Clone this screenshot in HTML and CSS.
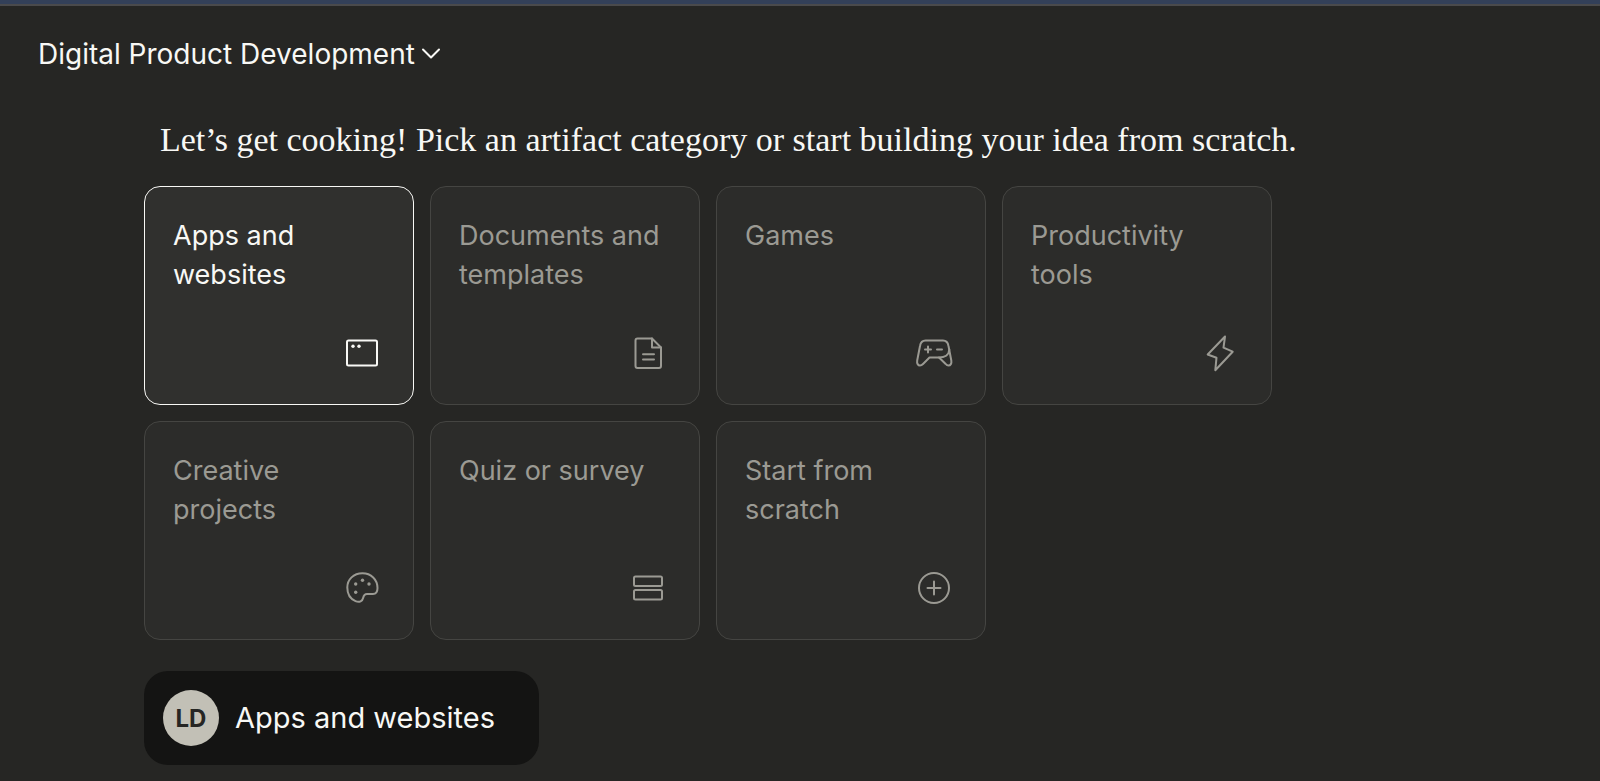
FILE: index.html
```html
<!DOCTYPE html>
<html lang="en">
  <head>
    <meta charset="UTF-8" />
    <meta name="viewport" content="width=device-width, initial-scale=1.0" />
    <title>Digital Product Development</title>
    <link rel="stylesheet" href="styles.css">
  </head>

  <body>
    <header class="header">
      <button class="project-menu" aria-haspopup="true">
        Digital Product Development
        <svg class="chevron" viewBox="0 0 20 20" aria-hidden="true">
          <path d="M2 5.500l8 8 8-8" />
        </svg>
      </button>
    </header>

    <main class="container">
      <h1 class="title">Let’s get cooking! Pick an artifact category or start building your idea from scratch.</h1>

      <!-- artifact categories -->
      <div class="cards">
        <button class="card selected" aria-pressed="true">
          <span class="label">Apps and websites</span>
          <svg class="icon" viewBox="0 0 46 46" aria-hidden="true">
            <rect x="8" y="10.500" width="30" height="25" rx="1.500" />
            <circle class="dot" cx="14" cy="16.300" r="1.700" />
            <circle class="dot" cx="20" cy="16.300" r="1.700" />
          </svg>
        </button>

        <button class="card">
          <span class="label">Documents and templates</span>
          <svg class="icon" viewBox="0 0 46 46" aria-hidden="true">
            <path d="M27 8.500H12.500a2 2 0 0 0-2 2v25.500a2 2 0 0 0 2 2h21.500a2 2 0 0 0 2-2V17.500z" />
            <path d="M27 8.500v9h9M18 24.300h11M18 29.500h11" />
          </svg>
        </button>

        <button class="card">
          <span class="label">Games</span>
          <svg class="icon" viewBox="0 0 46 46" aria-hidden="true">
            <path d="M14.500 10.500h17.500c3.800 0 5 2.500 5.500 5.500l2.800 14.500c.5 3-.8 5-2.800 5-1.300 0-2-.5-2.800-1.500L28 27.500H18.500L12 34c-1 1-1.700 1.500-3 1.500-2 0-3.300-2-2.800-5L9 16c.5-3 1.700-5.500 5.500-5.500z" />
            <path d="M28 27.500c5.500 0 10-2.500 10.300-8M17 16.500v6M14 19.500h6M26 19.500h5" />
          </svg>
        </button>

        <button class="card">
          <span class="label">Productivity tools</span>
          <svg class="icon" viewBox="0 0 46 46" aria-hidden="true">
            <path d="M28 6.500L10.700 24.500l8.800 3.200-1.200 12.500L35.700 21.700l-9.200-4z" />
          </svg>
        </button>

        <button class="card">
          <span class="label">Creative projects</span>
          <svg class="icon" viewBox="0 0 46 46" aria-hidden="true">
            <path d="M23.500 8.300C14.500 8.300 8.300 14.500 8.300 22.500c0 6.500 3.200 11.500 8.200 13.600 4 1.700 7 0 7.700-3.300.5-2.500 1.300-3.800 3.800-3.800h6c3 0 4.500-2 4.500-6C38.500 14.500 32 8.300 23.500 8.300z" />
            <circle class="dot" cx="23.500" cy="15.300" r="1.700" />
            <circle class="dot" cx="30" cy="19" r="1.700" />
            <circle class="dot" cx="16.700" cy="19" r="1.700" />
            <circle class="dot" cx="16.700" cy="27.300" r="1.700" />
          </svg>
        </button>

        <button class="card">
          <span class="label">Quiz or survey</span>
          <svg class="icon" viewBox="0 0 46 46" aria-hidden="true">
            <rect x="9" y="11.500" width="28" height="9.500" rx="1.500" />
            <rect x="9" y="25" width="28" height="9.500" rx="1.500" />
          </svg>
        </button>

        <button class="card">
          <span class="label">Start from scratch</span>
          <svg class="icon" viewBox="0 0 46 46" aria-hidden="true">
            <circle cx="23" cy="23" r="15" />
            <path d="M23 16.500v13M16.500 23h13" />
          </svg>
        </button>
      </div>

      <!-- user reply -->
      <div class="message">
        <span class="avatar">LD</span>
        <p class="message-text">Apps and websites</p>
      </div>
    </main>
  </body>
</html>
```

FILE: styles.css
```css
*,
*::before,
*::after {
  margin: 0;
  padding: 0;
  box-sizing: border-box;
}

body {
  min-height: 100vh;
  font-family: "Inter", sans-serif;
  background: #262624;
  color: #f8f8f5;
  border-top: 4px solid #334059;
}

button {
  font: inherit;
  color: inherit;
  background: none;
  border: none;
  cursor: pointer;
}

svg {
  fill: none;
  stroke: currentColor;
  stroke-width: 2;
  stroke-linecap: round;
  stroke-linejoin: round;
}

.header {
  border-top: 2px solid #4a4a4c;
  padding: 28px 38px;
}

.project-menu {
  display: flex;
  align-items: center;
  gap: 6px;
  font-size: 28px;
  line-height: 40px;
}

.chevron {
  width: 20px;
  height: 20px;
}

.container {
  max-width: 1416px;
  padding: 16px 144px;
}

.title {
  padding: 0 16px;
  font-family: "Liberation Serif", serif;
  font-size: 34px;
  font-weight: 400;
  line-height: 44px;
  white-space: nowrap;
}

.cards {
  display: grid;
  grid-template-columns: repeat(4, 1fr);
  gap: 16px;
  margin-top: 24px;
}

.card {
  display: flex;
  flex-direction: column;
  justify-content: space-between;
  min-height: 219px;
  padding: 29px 28px 28px;
  border: 1px solid #454542;
  border-radius: 16px;
  background: #2c2c2a;
  color: #9b9a93;
  font-size: 27px;
  line-height: 39px;
  text-align: left;
}

.card:hover {
  background: #30302e;
}

.card.selected {
  background: #30302e;
  border-color: #f8f8f5;
  color: #f8f8f5;
}

.icon {
  width: 46px;
  height: 46px;
  align-self: flex-end;
}

.dot {
  fill: currentColor;
  stroke: none;
}

.message {
  display: flex;
  align-items: center;
  gap: 16px;
  width: fit-content;
  margin-top: 31px;
  padding: 19px 44px 19px 19px;
  border-radius: 24px;
  background: #141413;
}

.avatar {
  display: flex;
  align-items: center;
  justify-content: center;
  width: 56px;
  height: 56px;
  border-radius: 50%;
  background: #c2c0b6;
  color: #262624;
  font-size: 24px;
  font-weight: 700;
}

.message-text {
  font-size: 29px;
  line-height: 40px;
}
```
